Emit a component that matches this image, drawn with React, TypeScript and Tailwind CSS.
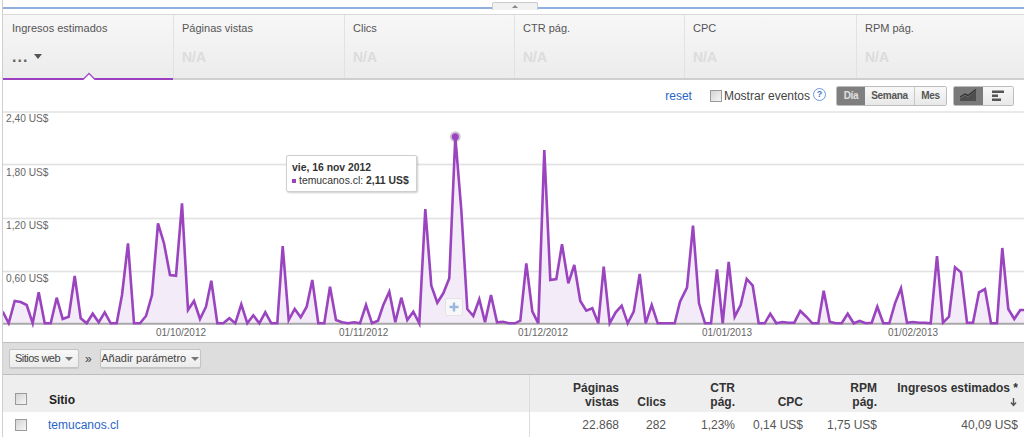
import React from "react";

const FONT = "font-['Liberation_Sans',Arial,sans-serif]";

// [x, y] read off the reference at 3x, per crop
const raw: [number, number][] = [
  [8,605],[26,640],[44,573],[62,576],[80,585],[98,640],[116,547],[134,640],[152,640],[170,563],[188,627],[206,620],[224,498],[242,625],[260,640],[278,611],[296,637],[314,607],[332,640],[350,640],[366,555],[384,400],[402,640],[420,640],[438,618],[456,555],[474,340],[492,400],[510,495],[528,497],[546,280],[564,600],[582,573],[600,627],[618,590],[634,512],[652,640],[670,640],[688,625],[706,640],[724,583],[742,640],[760,616],[778,640],[796,607],[814,640],[832,640],[848,408],[866,630],[884,597],[902,622],[920,590],[937,510],[955,640],[973,640],[990,530],[1008,630],
];
const mid: [number, number][] = [
  [6,637],[24,640],[42,637],[60,640],[78,585],[96,640],[114,632],[130,585],[148,545],[166,637],[184,563],[202,630],[220,605],[238,640],[256,297],[274,527],[292,578],[310,550],[328,505],[346,80],[364,300],[382,597],[400,618],[418,568],[435,637],[453,555],[471,637],[489,635],[507,640],[525,640],[541,632],[559,460],[577,604],[595,640],[613,120],[631,510],[649,507],[666,403],[685,520],[703,465],[721,573],[739,602],[757,595],[775,640],[791,470],[809,640],[827,607],[845,587],[863,640],[881,605],[899,492],[917,640],[935,585],[953,640],[971,640],[989,640],[1004,640],
];
const end: [number, number][] = [
  [0,575],[21,533],[39,347],[57,580],[75,640],[93,640],[111,478],[128,640],[146,456],[164,620],[182,585],[200,507],[218,527],[236,640],[254,640],[271,611],[289,640],[307,636],[325,638],[343,638],[361,603],[379,620],[397,640],[415,640],[431,542],[449,635],[467,640],[485,640],[503,611],[521,640],[539,633],[557,640],[575,638],[592,590],[610,640],[628,640],[645,580],[663,535],[681,638],[699,636],[717,638],[735,638],[752,640],[771,438],[789,638],[807,620],[825,472],[843,487],[861,638],[879,638],[897,547],[915,537],[933,640],[951,640],[967,414],[985,597],[1003,627],[1021,600],[1032,600],
];
const pts: [number, number][] = [
  ...raw.map(([x, y]): [number, number] => [x / 3, y / 3 - 1]),
  ...mid.map(([x, y]): [number, number] => [340 + x / 3, y / 3 - 1]),
  ...end.map(([x, y]): [number, number] => [680 + x / 3, y / 3 - 1]),
];
const line = pts.map(([x, y]) => `${x.toFixed(1)},${y.toFixed(1)}`).join(" ");
const area = `3,212.5 ${line} 1024,212.5`;

const metrics = ["Ingresos estimados", "Páginas vistas", "Clics", "CTR pág.", "CPC", "RPM pág."];
const widths = ["w-[171px]", "w-[171px]", "w-[170px]", "w-[170px]", "w-[172px]", "flex-1"];

function Checkbox() {
  return <span className="block h-[12px] w-[12px] border border-[#9a9a9a] bg-gradient-to-br from-[#d4d4d4] to-[#f6f6f6]" />;
}

function Caret({ className }: { className: string }) {
  return <span className={`inline-block h-0 w-0 border-x-[4px] border-t-[4px] border-x-transparent ${className}`} />;
}

function ToolButton({ label, className }: { label: string; className: string }) {
  return (
    <button className={`flex h-[19px] items-center justify-center gap-[5px] rounded-[2px] border border-[#c4c4c4] bg-gradient-to-b from-[#f8f8f8] to-[#ececec] text-[11px] text-[#444] shadow-[0_1px_1px_rgba(0,0,0,0.1)] ${className}`}>
      {label}
      <Caret className="border-t-[#777]" />
    </button>
  );
}

const headCell = "flex items-end justify-end bg-[#eeeeee] pb-[3px] text-right font-bold text-[#333]";

export default function App() {
  return (
    <div className={`${FONT} h-[437px] w-[1024px] overflow-hidden bg-white pl-[2px]`}>
      <div className="h-full border-l border-l-[#cfcfcf]">
        {/* collapse bar */}
        <div className="relative h-[14px]">
          <div className="h-[9px] border-b-2 border-b-[#8db0dd]" />
          <div className="absolute left-[489px] top-[2px] flex h-[8px] w-[46px] items-center justify-center rounded-t-[2px] border border-b-0 border-[#ccc] bg-[#f1f1f1]">
            <span className="h-0 w-0 border-x-[3px] border-b-[3px] border-x-transparent border-b-[#888]" />
          </div>
        </div>

        {/* metric tabs */}
        <div className="flex h-[66px] border-t border-b-2 border-t-[#d9d9d9] border-b-[#cfcfcf] bg-gradient-to-b from-[#f7f7f7] to-[#ececec]">
          {metrics.map((m, i) => (
            <div key={m} className={`relative ${widths[i]} ${i < 5 ? "border-r border-r-[#e2e2e2]" : ""} ${i === 0 ? "pl-[9px]" : "pl-[8px]"} pt-[6px]`}>
              <div className="text-[11px] leading-[14px] text-[#555]">{m}</div>
              {i === 0 ? (
                <div className="mt-[13px] flex items-center gap-[6px] text-[16px] font-bold leading-[18px] text-[#666]">
                  <span className="tracking-[1px]">...</span>
                  <Caret className="mb-[2px] border-x-[4.5px] border-t-[5px] border-t-[#555]" />
                </div>
              ) : (
                <div className="mt-[14px] text-[14px] font-bold leading-[16px] text-[#dcdcdc]">N/A</div>
              )}
              {i === 0 && (
                <>
                  <div className="absolute -bottom-[2px] left-0 right-0 h-[2px] bg-[#9b3fc0]" />
                  <svg width="14" height="8" viewBox="0 0 14 8" className="absolute -bottom-[2px] left-[79px]">
                    <path d="M1 8 L7 2 L13 8 Z" fill="#ffffff" />
                    <path d="M1 7.5 L7 1.5 L13 7.5" fill="none" stroke="#a455c8" strokeWidth="1.5" />
                  </svg>
                </>
              )}
            </div>
          ))}
        </div>

        {/* chart controls */}
        <div className="flex h-[31px] items-center justify-end pr-[10px]">
          <a className="mr-[18px] text-[12px] text-[#2a66c8]">reset</a>
          <Checkbox />
          <span className="ml-[2px] text-[12px] text-[#444]">Mostrar eventos</span>
          <span className="mb-[2px] ml-[3px] flex h-[13px] w-[13px] items-center justify-center rounded-full border border-[#6d97d8] bg-white text-[9px] font-bold leading-none text-[#3c73c8]">?</span>
          <div className="ml-[10px] flex h-[20px] overflow-hidden rounded-[2px] border border-[#bdbdbd] text-[10px] font-bold tracking-[-0.3px]">
            <span className="flex w-[28px] items-center justify-center bg-[#7f7f7f] text-[#e0e0e0]">Día</span>
            <span className="flex w-[50px] items-center justify-center border-r border-r-[#c8c8c8] bg-gradient-to-b from-[#f8f8f8] to-[#e8e8e8] text-[#555]">Semana</span>
            <span className="flex w-[31px] items-center justify-center bg-gradient-to-b from-[#f8f8f8] to-[#e8e8e8] text-[#555]">Mes</span>
          </div>
          <div className="ml-[6px] flex h-[20px] overflow-hidden rounded-[2px] border border-[#bdbdbd]">
            <span className="flex w-[29px] items-center justify-center bg-[#7a7a7a]">
              <svg width="17" height="13" viewBox="0 0 17 13">
                <path d="M0 9.5 L5 6.5 L8 8 L16 1.5 L16 12 L0 12 Z" fill="#4e4e4e" />
                <path d="M0 8 L5 5 L8 6.5 L16 0.5" fill="none" stroke="#333" strokeWidth="1.4" />
              </svg>
            </span>
            <span className="flex w-[30px] items-center justify-center bg-gradient-to-b from-[#f8f8f8] to-[#e8e8e8]">
              <svg width="12" height="12" viewBox="0 0 12 12">
                <rect x="0" y="0.5" width="12" height="2.5" fill="#555" />
                <rect x="0" y="4.5" width="6" height="2.5" fill="#555" />
                <rect x="0" y="8.5" width="9" height="2.5" fill="#555" />
              </svg>
            </span>
          </div>
        </div>

        {/* chart */}
        <div className="relative h-[231px]">
          <svg width="1021" height="231" viewBox="3 0 1021 231" className="block">
            {[0.5, 53, 107, 160].map((y) => (
              <line key={y} x1="3" x2="1024" y1={y + 0.5} y2={y + 0.5} stroke="#e2e2e2" strokeWidth="1.5" />
            ))}
            <polygon points={area} fill="#f3ecf8" />
            {[53, 107, 160].map((y) => (
              <line key={y} x1="3" x2="1024" y1={y + 0.5} y2={y + 0.5} stroke="#e2e2e2" strokeOpacity="0.5" strokeWidth="1.5" />
            ))}
            <line x1="3" x2="1024" y1="212.8" y2="212.8" stroke="#a8a8a8" strokeWidth="2" />
            <polyline points={line} fill="none" stroke="#9a44bf" strokeWidth="2.6" strokeLinejoin="miter" />
            <circle cx="455.3" cy="25.7" r="5.5" fill="#7a5a8a" opacity="0.35" />
            <circle cx="455.3" cy="25.7" r="3.5" fill="#9a44bf" />
          </svg>

          {[
            ["2,40 US$", "top-[1px]"],
            ["1,80 US$", "top-[55px]"],
            ["1,20 US$", "top-[108px]"],
            ["0,60 US$", "top-[161px]"],
          ].map(([t, c]) => (
            <span key={t} className={`absolute left-[3px] ${c} mt-[1px] text-[10.2px] leading-[12px] text-[#666]`}>{t}</span>
          ))}
          {[
            ["01/10/2012", "left-[153px]"],
            ["01/11/2012", "left-[336px]"],
            ["01/12/2012", "left-[515px]"],
            ["01/01/2013", "left-[699px]"],
            ["01/02/2013", "left-[885px]"],
          ].map(([t, c]) => (
            <span key={t} className={`absolute top-[216px] ${c} text-[10px] leading-[12px] text-[#666]`}>{t}</span>
          ))}

          <div className="absolute left-[283px] top-[44px] h-[37px] w-[131px] rounded-[2px] border border-[#cfcfcf] bg-white px-[5px] pt-[5px] text-[10.4px] leading-[13px] text-[#333] shadow-[1px_1px_2px_rgba(0,0,0,0.2)]">
            <div className="font-bold">vie, 16 nov 2012</div>
            <div className="flex items-center">
              <span className="mr-[3px] h-[4px] w-[4px] bg-[#9a44bf]" />
              <span>temucanos.cl:&nbsp;</span>
              <span className="font-bold">2,11 US$</span>
            </div>
          </div>

          <div className="absolute left-[442px] top-[187px] flex h-[18px] w-[18px] items-center justify-center rounded-[2px] border border-[#e4e4e4] bg-[#f8f8f8]">
            <svg width="10" height="10" viewBox="0 0 10 10">
              <path d="M5 0.5V9.5M0.5 5H9.5" stroke="#9db7dc" strokeWidth="2.4" />
            </svg>
          </div>
        </div>

        {/* table toolbar */}
        <div className="flex h-[33px] items-center border-y border-y-[#bdbdbd] bg-[#dddddd] pl-[6px]">
          <ToolButton label="Sitios web" className="w-[70px] tracking-[-0.5px]" />
          <span className="ml-[6px] mr-[8px] text-[12px] text-[#444]">»</span>
          <ToolButton label="Añadir parámetro" className="w-[101px]" />
        </div>

        {/* table */}
        <div className="grid grid-cols-[527px_89px_47px_69px_68px_74px_141px_6px] text-[12px] leading-[14px] text-[#444]">
          <div className="flex h-[37px] items-end gap-[22px] border-r border-r-[#dcdcdc] bg-[#eeeeee] pb-[5px] pl-[12px]">
            <span className="mb-[2px]"><Checkbox /></span>
            <span className="font-bold text-[#222]">Sitio</span>
          </div>
          <div className={headCell}>Páginas<br />vistas</div>
          <div className={headCell}>Clics</div>
          <div className={headCell}>CTR<br />pág.</div>
          <div className={headCell}>CPC</div>
          <div className={headCell}>RPM<br />pág.</div>
          <div className={`${headCell} flex-col items-end`}>
            <span>Ingresos estimados *</span>
            <svg width="7" height="14" viewBox="0 0 7 14" className="mr-[1px]">
              <path d="M3.5 3V10M1 7.5L3.5 10.5L6 7.5" fill="none" stroke="#555" strokeWidth="1.4" />
            </svg>
          </div>
          <div className="bg-[#eeeeee]" />

          <div className="flex h-[25px] items-center gap-[21px] border-r border-r-[#dcdcdc] pl-[12px]">
            <Checkbox />
            <a className="text-[#2a66c8]">temucanos.cl</a>
          </div>
          {["22.868", "282", "1,23%", "0,14 US$", "1,75 US$", "40,09 US$"].map((v) => (
            <div key={v} className="flex items-center justify-end text-[#555]">{v}</div>
          ))}
          <div />
        </div>
      </div>
    </div>
  );
}
